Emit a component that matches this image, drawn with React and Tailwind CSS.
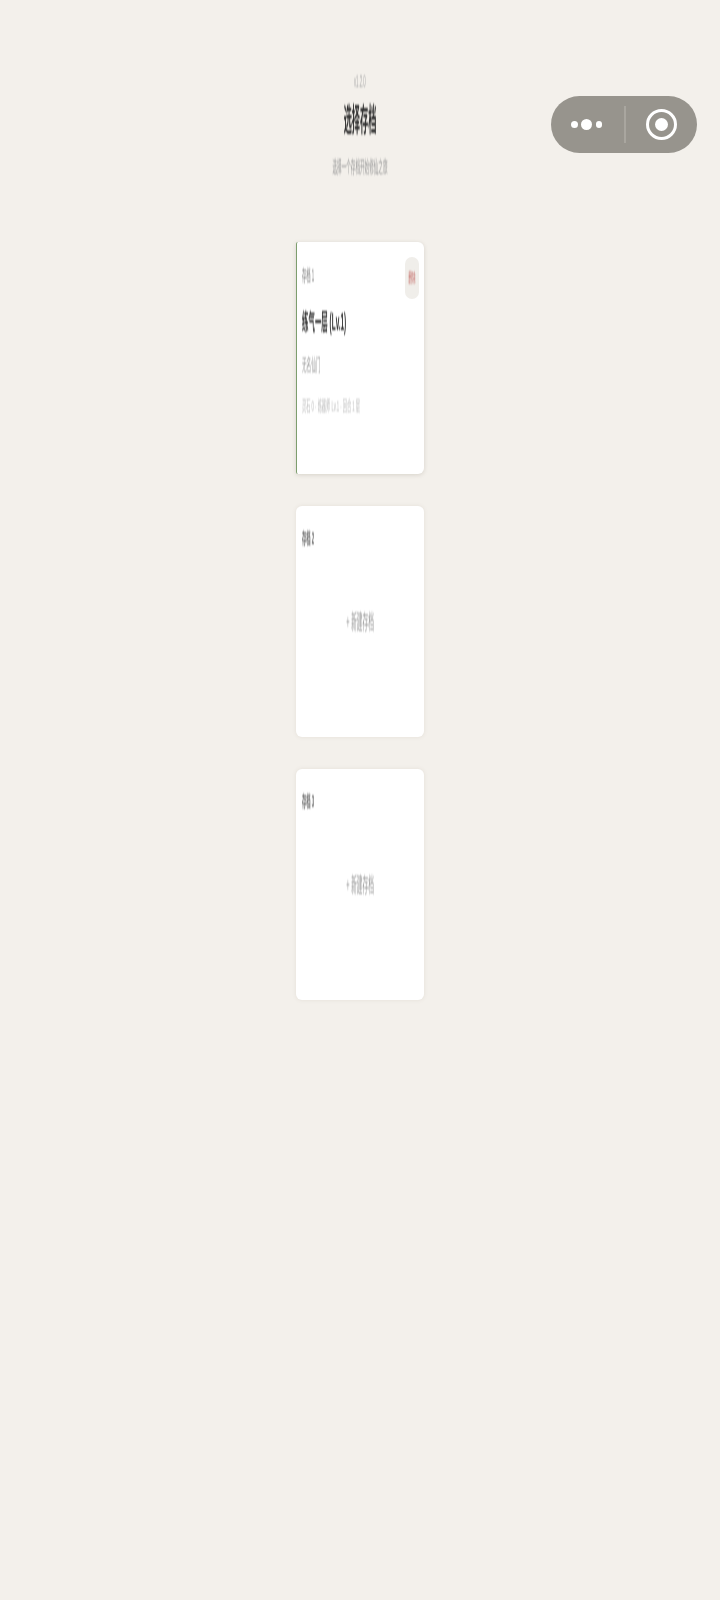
const font = "[font-family:'Liberation_Sans','Noto_Sans_CJK_SC',sans-serif]";

function Squeezed({ className = "", scale = "scale-x-[0.27]", children }) {
  return (
    <div className={`whitespace-nowrap blur-[0.8px] ${scale} ${className}`}>{children}</div>
  );
}

function EmptySlot({ label }) {
  return (
    <div className="w-[128px] h-[231px] bg-white rounded-[6px] shadow-[0_0_4px_rgba(120,110,90,0.12)] flex flex-col pl-[6px] pt-[22px]">
      <Squeezed className="origin-left text-[16px] leading-[22px] font-bold text-[#666]">{label}</Squeezed>
      <div className="flex justify-center mt-[58px] -ml-[6px]">
        <Squeezed className="text-[21px] leading-[28px] text-[#999]">+ 新建存档</Squeezed>
      </div>
    </div>
  );
}

export default function App() {
  return (
    <div className={`relative w-[720px] h-[1600px] bg-[#f3f0eb] flex flex-col items-center ${font}`}>
      <div className="flex flex-col items-center pt-[73px] w-full">
        <Squeezed className="text-[16px] leading-[18px] text-[#aaa]">v1.2.0</Squeezed>
        <Squeezed scale="scale-x-[0.255]" className="text-[32px] leading-[40px] font-bold text-[#2e2e2e] mt-[9px]">选择存档</Squeezed>
        <Squeezed className="text-[17px] leading-[22px] text-[#999] mt-[17px]">选择一个存档开始修仙之旅</Squeezed>
      </div>

      <div className="flex flex-col gap-[32px] mt-[63px]">
        <div className="relative w-[128px] h-[232px] bg-white rounded-[6px] rounded-l-[2px] border-l-[1.5px] border-[#7d9e6e] shadow-[0_1px_4px_rgba(120,110,90,0.22)] pl-[5px] pt-[23px]">
          <Squeezed className="origin-left text-[16px] leading-[22px] text-[#777]">存档 1</Squeezed>
          <Squeezed scale="scale-x-[0.28]" className="origin-left text-[23px] leading-[30px] font-bold text-[#2e2e2e] mt-[20px]">练气一层 (Lv.1)</Squeezed>
          <Squeezed className="origin-left text-[17px] leading-[22px] text-[#999] mt-[18px]">无名仙门</Squeezed>
          <Squeezed scale="scale-x-[0.28]" className="origin-left text-[15px] leading-[20px] text-[#bbb] mt-[19px]">灵石 0 · 炼器师 Lv.1 · 回合 1 层</Squeezed>
          <div className="absolute right-[5px] top-[15px] w-[14px] h-[42px] rounded-[7px] bg-[#f0eeea] flex items-center justify-center">
            <Squeezed className="text-[13px] leading-[16px] text-[#c0605c]">删除</Squeezed>
          </div>
        </div>
        <EmptySlot label="存档 2" />
        <EmptySlot label="存档 3" />
      </div>

      <div className="absolute left-[551px] top-[96px] w-[146px] h-[57px] rounded-full bg-[#97948d] flex items-center blur-[0.4px]">
        <div className="flex-1 flex items-center justify-center gap-[3.5px] pr-[2px]">
          <span className="w-[6.5px] h-[6.5px] rounded-full bg-white" />
          <span className="w-[11px] h-[11px] rounded-full bg-white" />
          <span className="w-[6.5px] h-[6.5px] rounded-full bg-white" />
        </div>
        <div className="w-[1.5px] h-[37px] bg-[#a9a69f]" />
        <div className="flex-1 flex items-center justify-center">
          <div className="w-[31px] h-[31px] rounded-full border-[3px] border-white flex items-center justify-center">
            <span className="w-[13px] h-[13px] rounded-full bg-white" />
          </div>
        </div>
      </div>
    </div>
  );
}
